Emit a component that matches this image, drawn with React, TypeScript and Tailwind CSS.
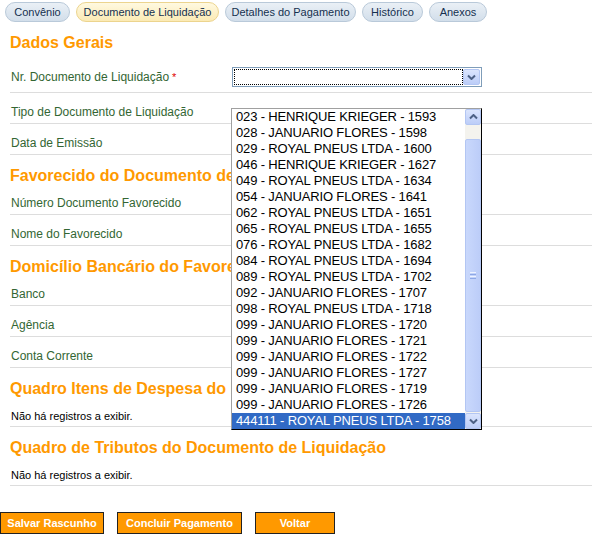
import React from "react";

const tabs = [
  { label: "Convênio", w: "w-[65px]", active: false },
  { label: "Documento de Liquidação", w: "w-[143px]", active: true },
  { label: "Detalhes do Pagamento", w: "w-[131px]", active: false },
  { label: "Histórico", w: "w-[61px]", active: false },
  { label: "Anexos", w: "w-[58px]", active: false },
];

const options = [
  "023 - HENRIQUE KRIEGER - 1593",
  "028 - JANUARIO FLORES - 1598",
  "029 - ROYAL PNEUS LTDA - 1600",
  "046 - HENRIQUE KRIEGER - 1627",
  "049 - ROYAL PNEUS LTDA - 1634",
  "054 - JANUARIO FLORES - 1641",
  "062 - ROYAL PNEUS LTDA - 1651",
  "065 - ROYAL PNEUS LTDA - 1655",
  "076 - ROYAL PNEUS LTDA - 1682",
  "084 - ROYAL PNEUS LTDA - 1694",
  "089 - ROYAL PNEUS LTDA - 1702",
  "092 - JANUARIO FLORES - 1707",
  "098 - ROYAL PNEUS LTDA - 1718",
  "099 - JANUARIO FLORES - 1720",
  "099 - JANUARIO FLORES - 1721",
  "099 - JANUARIO FLORES - 1722",
  "099 - JANUARIO FLORES - 1727",
  "099 - JANUARIO FLORES - 1719",
  "099 - JANUARIO FLORES - 1726",
  "444111 - ROYAL PNEUS LTDA - 1758",
];

function Chevron({ up = false }: { up?: boolean }) {
  return (
    <svg width="9" height="6" viewBox="0 0 9 6" className={up ? "rotate-180" : ""}>
      <path d="M1 1.5 L4.5 5 L8 1.5" fill="none" stroke="#4d6185" strokeWidth="2" />
    </svg>
  );
}

function ScrollButton({ up = false }: { up?: boolean }) {
  return (
    <div className="w-[16px] h-[16px] flex items-center justify-center rounded-[2px] border border-[#b3c6f3] bg-gradient-to-b from-[#dbe5fd] to-[#bccdf8]">
      <Chevron up={up} />
    </div>
  );
}

function Heading({ children }: { children: React.ReactNode }) {
  return (
    <div className="h-[29px] pt-[13px] pl-[10px] text-[16px] leading-[16px] font-bold text-[#ff9900] whitespace-nowrap">
      {children}
    </div>
  );
}

function Row({ label }: { label: string }) {
  return (
    <div className="ml-[10px] h-[31px] border-b border-[#dddddd] pt-[12px] pl-[1px] text-[12px] leading-[14px] text-[#336633]">
      {label}
    </div>
  );
}

function Empty() {
  return (
    <div className="ml-[10px] h-[30px] border-b border-[#dddddd] pt-[13px] pl-[1px] text-[11px] leading-[13px] text-black">
      Não há registros a exibir.
    </div>
  );
}

export default function App() {
  return (
    <div className="relative w-[592px] h-[536px] bg-white overflow-hidden font-['Liberation_Sans',Arial,sans-serif]">
      {/* tabs */}
      <div className="flex gap-[6px] pl-[5px] pt-[2px]">
        {tabs.map((t) => (
          <div
            key={t.label}
            className={
              t.active
                ? `${t.w} h-[20px] flex items-center justify-center rounded-full border border-[#ecd48e] bg-gradient-to-b from-[#fff9e0] to-[#fbeab4] text-[11px] text-[#15304f] whitespace-nowrap`
                : `${t.w} h-[20px] flex items-center justify-center rounded-full border border-[#b9c9d9] bg-gradient-to-b from-[#eaf0f6] to-[#d2deea] text-[11px] text-[#15304f] whitespace-nowrap`
            }
          >
            {t.label}
          </div>
        ))}
      </div>

      <Heading>Dados Gerais</Heading>
      <div className="ml-[10px] h-[42px] border-b border-[#dddddd] pt-[16px] flex items-start">
        <div className="w-[222px] pt-[3px] pl-[1px] text-[12px] leading-[14px] text-[#336633] whitespace-nowrap">
          Nr. Documento de Liquidação
          <span className="ml-[3px] text-[#e00000] text-[11px]">*</span>
        </div>
        <div className="w-[250px] h-[20px] border border-[#7f9db9] bg-white flex p-[1px]">
          <div className="flex-1 border border-dotted border-black" />
          <div className="w-[17px] flex items-center justify-center rounded-[2px] border border-[#b3c6f3] bg-gradient-to-b from-[#dbe5fd] to-[#bccdf8]">
            <Chevron />
          </div>
        </div>
      </div>
      <Row label="Tipo de Documento de Liquidação" />
      <Row label="Data de Emissão" />

      <Heading>Favorecido do Documento de Liquidação</Heading>
      <Row label="Número Documento Favorecido" />
      <Row label="Nome do Favorecido" />

      <Heading>Domicílio Bancário do Favorecido</Heading>
      <Row label="Banco" />
      <Row label="Agência" />
      <Row label="Conta Corrente" />

      <Heading>Quadro Itens de Despesa do Documento de Liquidação</Heading>
      <Empty />

      <Heading>Quadro de Tributos do Documento de Liquidação</Heading>
      <Empty />

      <div className="mt-[26px] flex gap-[13px]">
        <button className="w-[104px] h-[22px] border border-[#222] bg-[#ff9900] text-white text-[11px] font-bold">
          Salvar Rascunho
        </button>
        <button className="w-[125px] h-[22px] border border-[#222] bg-[#ff9900] text-white text-[11px] font-bold">
          Concluir Pagamento
        </button>
        <button className="w-[80px] h-[22px] border border-[#222] bg-[#ff9900] text-white text-[11px] font-bold">
          Voltar
        </button>
      </div>

      {/* open listbox of the select */}
      <div className="absolute left-[231px] top-[108px] w-[251px] h-[322px] flex bg-white border-l border-t border-[#a0a0a0] border-r-black border-b-black border-r border-b">
        <div className="w-[233px] flex flex-col">
          {options.map((o, i) => (
            <div
              key={o + i}
              className={
                i === options.length - 1
                  ? "h-[16px] pl-[4px] text-[13px] leading-[16px] tracking-[-0.15px] whitespace-nowrap bg-[#316ac5] text-white"
                  : "h-[16px] pl-[4px] text-[13px] leading-[16px] tracking-[-0.15px] whitespace-nowrap text-black"
              }
            >
              {o}
            </div>
          ))}
        </div>
        <div className="w-[16px] flex flex-col bg-[#f4f3ee]">
          <ScrollButton up />
          <div className="flex-1 pt-[14px] pb-[1px] flex flex-col">
            <div className="flex-1 rounded-[2px] border border-[#b3c6f3] bg-gradient-to-r from-[#c9d8fc] to-[#bccdf8] flex flex-col items-center justify-center gap-[1px]">
              <div className="w-[6px] h-[1px] bg-[#eef3ff]" />
              <div className="w-[6px] h-[1px] bg-[#8ea8e6]" />
              <div className="w-[6px] h-[1px] bg-[#eef3ff]" />
              <div className="w-[6px] h-[1px] bg-[#8ea8e6]" />
            </div>
          </div>
          <ScrollButton />
        </div>
      </div>
    </div>
  );
}
